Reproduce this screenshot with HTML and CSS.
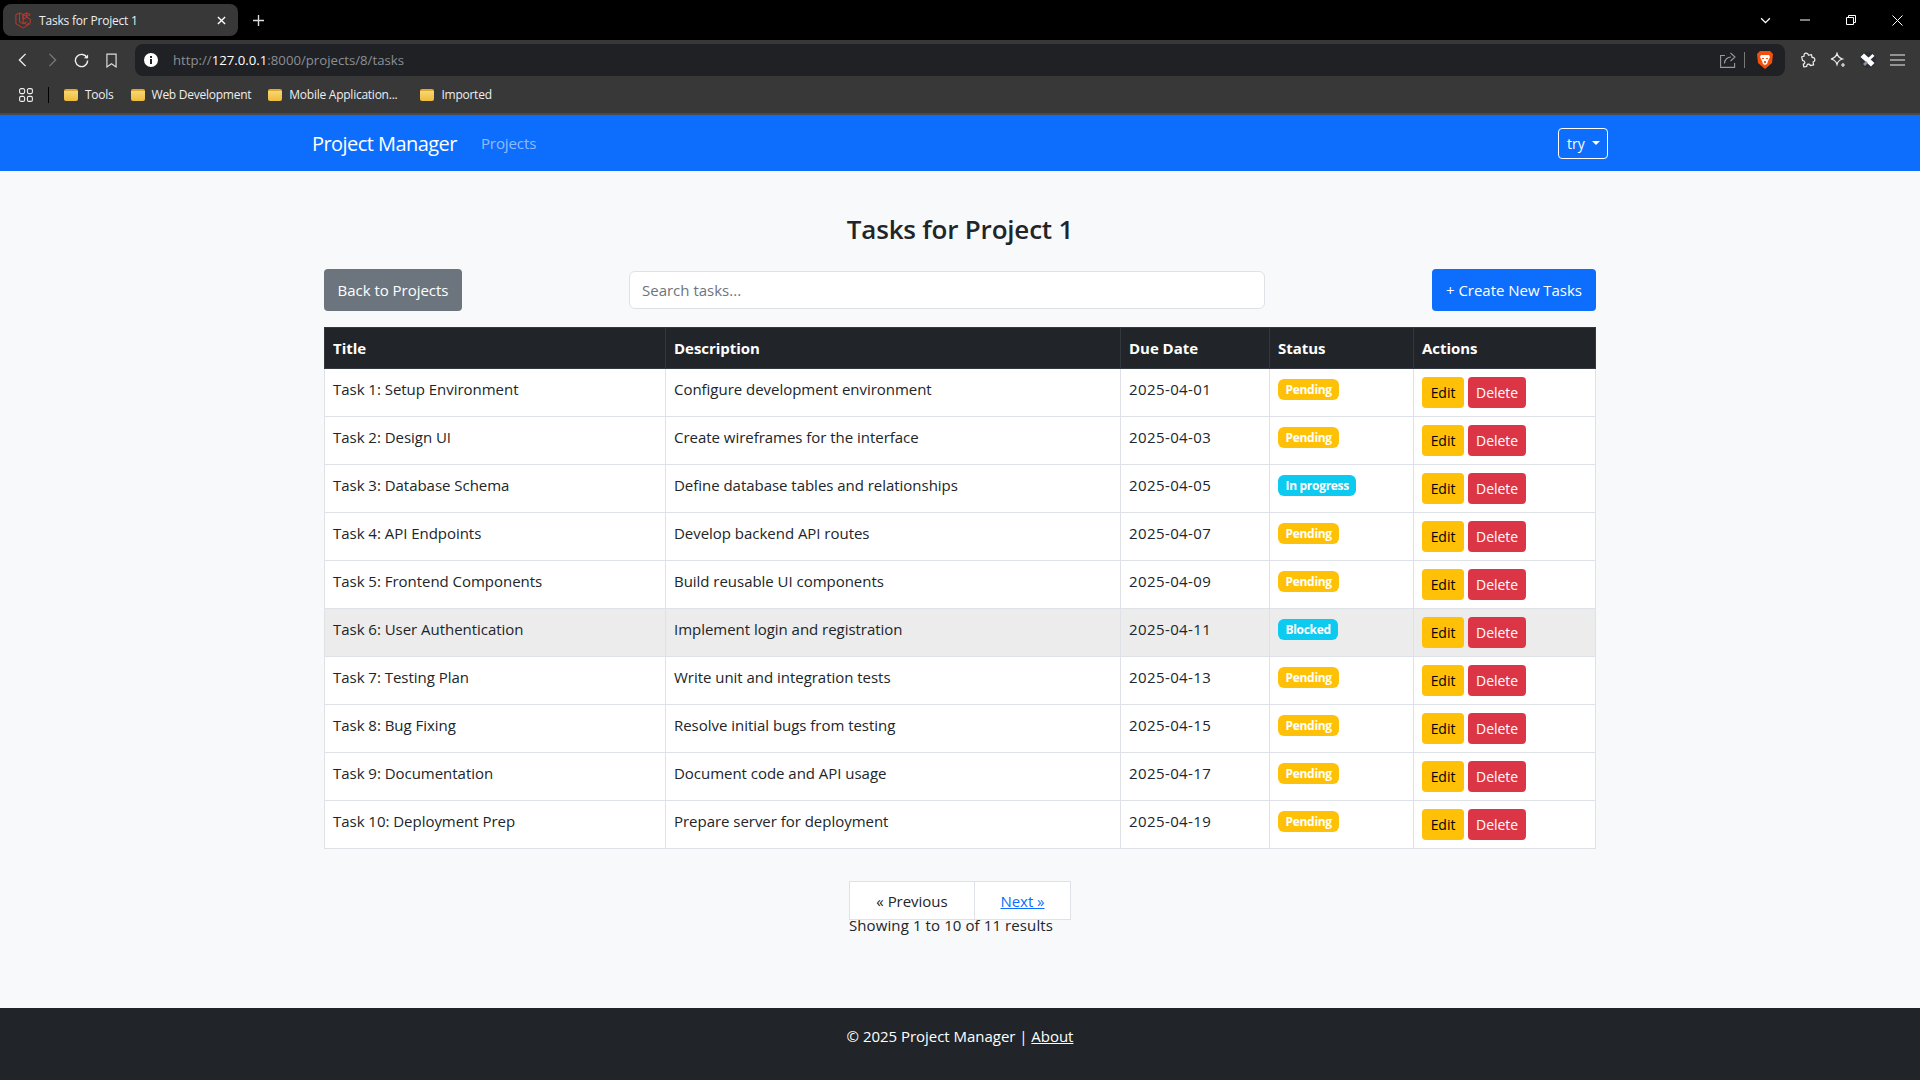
FILE: index.html
```html
<!DOCTYPE html>
<html lang="en">
<head>
  <meta charset="UTF-8">
  <title>Tasks for Project 1</title>
  <link rel="stylesheet" href="styles.css">
</head>
<body>

  <div class="tabstrip">
    <div class="tab">
      <svg class="favicon" viewBox="0 0 20 20" fill="none" stroke="#c0392b" stroke-width="1.1"><path d="M1 4l4-2 4 2v9l4 2 4-2V9l-4-2-4 2M1 4v10l8 5 8-5M5 2v10l4 2 4-2M9 4v5M13 2l4 2-4 2-4-2zM13 2v5"/></svg>
      <span class="tab-title">Tasks for Project 1</span>
      <svg class="tab-close" viewBox="0 0 10 10" stroke="#fff" stroke-width="1.5"><path d="M1 1l8 8M9 1l-8 8"/></svg>
    </div>
    <svg class="new-tab" viewBox="0 0 12 12" stroke="#ddd" stroke-width="1.5"><path d="M6 0v12M0 6h12"/></svg>
    <div class="win-controls">
      <svg class="win-chevron" viewBox="0 0 12 8" fill="none" stroke="#fff" stroke-width="1.5"><path d="M1 1.500l5 5 5-5"/></svg>
      <svg class="win-min" viewBox="0 0 10 2" stroke="#fff"><path d="M0 1h10"/></svg>
      <svg class="win-restore" viewBox="0 0 10 10" fill="none" stroke="#fff"><path d="M.5 2.500h7v7h-7zM2.500 2.500v-2h7v7h-2"/></svg>
      <svg class="win-close" viewBox="0 0 11 11" stroke="#fff"><path d="M.5.5l10 10M10.500.5l-10 10"/></svg>
    </div>
  </div>

  <div class="toolbar">
    <svg class="tool-back" viewBox="0 0 10 16" fill="none" stroke="#eee" stroke-width="1.6"><path d="M8.500 1l-7 7 7 7"/></svg>
    <svg class="tool-forward" viewBox="0 0 10 16" fill="none" stroke="#777" stroke-width="1.6"><path d="M1.500 1l7 7-7 7"/></svg>
    <svg class="tool-reload" viewBox="0 0 16 16" fill="none" stroke="#eee" stroke-width="1.5"><path d="M14 5.500A6.500 6.500 0 1 0 14.500 8"/><path d="M10.500 5.500H15V1.500" fill="#eee" stroke="none"/></svg>
    <svg class="tool-bookmark" viewBox="0 0 12 16" fill="none" stroke="#ddd" stroke-width="1.3"><path d="M1 1h10v14l-5-3.500L1 15z"/></svg>
    <div class="addressbar">
      <svg class="addr-info" viewBox="0 0 14 14"><circle cx="7" cy="7" r="7" fill="#fff"/><path d="M6 6h2v5H6zM6 3h2v2H6z" fill="#222"/></svg>
      <span class="url">http://<b>127.0.0.1</b>:8000/projects/8/tasks</span>
      <svg class="addr-share" viewBox="0 0 16 16" fill="none" stroke="#999" stroke-width="1.1"><path d="M5 3.500H.6v11.900h14V11M4.500 11.500c0-4 3-6.500 6.500-6.500M10.500 1l4.500 4-4.500 4"/></svg>
      <span class="addr-sep"></span>
      <svg class="addr-brave" viewBox="0 0 16 18"><path d="M3 0h10l3 3-1 9-7 6-7-6-1-9z" fill="#f1500f"/><path d="M4 4h8l1 2-2 4-1 3-2 1-2-1-1-3-2-4z" fill="#fff"/><path d="M5 7h2v1H5zM9 7h2v1H9zM7 10h2v2H7z" fill="#f1500f"/></svg>
    </div>
    <svg class="tool-ext" viewBox="0 0 16 16" fill="none" stroke="#eee" stroke-width="1.2" stroke-linejoin="round"><path transform="rotate(-12 8 8)" d="M2.500 3.500h2.500c-.3-3.500 4.500-3.500 4.500 0h3v3c3-.3 3 4.500 0 4.500v3H9c.3-2.500-3.500-2.500-3.500 0h-3V11c2.500.3 2.500-3.500 0-3.500z"/></svg>
    <svg class="tool-star" viewBox="0 0 16 16" fill="none" stroke="#eee" stroke-width="1.2"><path d="M7 1.500c.8 3 2 4.500 5.500 5.500-3.500 1-4.700 2.500-5.500 5.500C6.200 9.500 5 8 1 7c4-1 5.200-2.500 6-5.500z"/><path d="M13 11v4M11 13h4"/></svg>
    <svg class="tool-x" viewBox="0 0 16 16"><circle cx="8" cy="8" r="8" fill="#2b2f36"/><path d="M.5 5L4 1.500 14.500 11 11 14.500z" fill="#fff"/><path d="M12.500 2l2 2-5.500 5-2-2z" fill="#fff"/><path d="M6 9l2 2-3 3-2-2z" fill="#8a8f96"/></svg>
    <svg class="tool-menu" viewBox="0 0 15 12" stroke="#eee" stroke-width="1.2"><path d="M0 1h15M0 6h15M0 11h15"/></svg>
  </div>

  <div class="bookmarks">
    <svg class="apps" viewBox="0 0 14 14" fill="none" stroke="#eee" stroke-width="1.1"><rect x=".6" y=".6" width="5" height="5" rx="1.500"/><rect x="8.400" y=".6" width="5" height="5" rx="1.500"/><rect x=".6" y="8.400" width="5" height="5" rx="1.500"/><rect x="8.400" y="8.400" width="5" height="5" rx="1.500"/></svg>
    <span class="bm-sep"></span>
    <a class="bm bm-tools"><span class="folder"></span>Tools</a>
    <a class="bm bm-web"><span class="folder"></span>Web Development</a>
    <a class="bm bm-mobile"><span class="folder"></span>Mobile Application...</a>
    <a class="bm"><span class="folder"></span>Imported</a>
  </div>

  <nav class="navbar">
    <div class="nav-inner">
      <a class="brand">Project Manager</a>
      <a class="nav-link">Projects</a>
      <button class="user-btn">try<span class="caret"></span></button>
    </div>
  </nav>

  <main class="container">
    <h1>Tasks for Project 1</h1>

    <div class="actions">
      <a class="btn btn-back">Back to Projects</a>
      <input class="search" type="text" placeholder="Search tasks...">
      <a class="btn btn-create">+ Create New Tasks</a>
    </div>

    <table class="tasks">
      <thead>
        <tr>
          <th class="col-title">Title</th>
          <th class="col-desc">Description</th>
          <th class="col-date">Due Date</th>
          <th class="col-status">Status</th>
          <th>Actions</th>
        </tr>
      </thead>
      <tbody>
        <tr>
          <td>Task 1: Setup Environment</td>
          <td>Configure development environment</td>
          <td class="date">2025-04-01</td>
          <td><span class="badge pending">Pending</span></td>
          <td><a class="small edit">Edit</a><a class="small delete">Delete</a></td>
        </tr>
        <tr>
          <td>Task 2: Design UI</td>
          <td>Create wireframes for the interface</td>
          <td class="date">2025-04-03</td>
          <td><span class="badge pending">Pending</span></td>
          <td><a class="small edit">Edit</a><a class="small delete">Delete</a></td>
        </tr>
        <tr>
          <td>Task 3: Database Schema</td>
          <td>Define database tables and relationships</td>
          <td class="date">2025-04-05</td>
          <td><span class="badge info">In progress</span></td>
          <td><a class="small edit">Edit</a><a class="small delete">Delete</a></td>
        </tr>
        <tr>
          <td>Task 4: API Endpoints</td>
          <td>Develop backend API routes</td>
          <td class="date">2025-04-07</td>
          <td><span class="badge pending">Pending</span></td>
          <td><a class="small edit">Edit</a><a class="small delete">Delete</a></td>
        </tr>
        <tr>
          <td>Task 5: Frontend Components</td>
          <td>Build reusable UI components</td>
          <td class="date">2025-04-09</td>
          <td><span class="badge pending">Pending</span></td>
          <td><a class="small edit">Edit</a><a class="small delete">Delete</a></td>
        </tr>
        <tr class="hover">
          <td>Task 6: User Authentication</td>
          <td>Implement login and registration</td>
          <td class="date">2025-04-11</td>
          <td><span class="badge info">Blocked</span></td>
          <td><a class="small edit">Edit</a><a class="small delete">Delete</a></td>
        </tr>
        <tr>
          <td>Task 7: Testing Plan</td>
          <td>Write unit and integration tests</td>
          <td class="date">2025-04-13</td>
          <td><span class="badge pending">Pending</span></td>
          <td><a class="small edit">Edit</a><a class="small delete">Delete</a></td>
        </tr>
        <tr>
          <td>Task 8: Bug Fixing</td>
          <td>Resolve initial bugs from testing</td>
          <td class="date">2025-04-15</td>
          <td><span class="badge pending">Pending</span></td>
          <td><a class="small edit">Edit</a><a class="small delete">Delete</a></td>
        </tr>
        <tr>
          <td>Task 9: Documentation</td>
          <td>Document code and API usage</td>
          <td class="date">2025-04-17</td>
          <td><span class="badge pending">Pending</span></td>
          <td><a class="small edit">Edit</a><a class="small delete">Delete</a></td>
        </tr>
        <tr>
          <td>Task 10: Deployment Prep</td>
          <td>Prepare server for deployment</td>
          <td class="date">2025-04-19</td>
          <td><span class="badge pending">Pending</span></td>
          <td><a class="small edit">Edit</a><a class="small delete">Delete</a></td>
        </tr>
      </tbody>
    </table>

    <div class="pager-wrap">
      <div class="pager">
        <div class="pager-links">
          <span class="page prev">« Previous</span>
          <a class="page next">Next »</a>
        </div>
        <p class="results">Showing 1 to 10 of 11 results</p>
      </div>
    </div>
  </main>

  <footer class="footer">© 2025 Project Manager | <a>About</a></footer>

</body>
</html>
```

FILE: styles.css
```css
* { box-sizing: border-box; }
html, body { margin: 0; padding: 0; height: 100%; }
body {
  display: flex; flex-direction: column; min-height: 1080px; overflow: hidden;
  font-family: "Open Sans", "Noto Sans", sans-serif; font-size: 15px;
  letter-spacing: -0.03px; color: #212529; background-color: #f8f9fa;
}
svg { display: block; flex: none; }

/* browser chrome */
.tabstrip { display: flex; align-items: center; height: 40px; background: #000; padding-left: 3px; }
.tab {
  display: flex; align-items: center; width: 235px; height: 32px; padding: 0 12px 0 12px;
  background: #383838; border-radius: 8px; color: #eee; font-size: 12px; letter-spacing: -0.2px;
}
.favicon { width: 18px; height: 18px; margin-right: 6px; }
.tab-title { flex: 1; }
.tab-close { width: 9px; height: 9px; stroke-width: 1.5; }
.new-tab { width: 11px; height: 11px; margin-left: 15px; }
.win-controls { display: flex; align-items: center; margin-left: auto; }
.win-chevron { width: 11px; height: 7px; margin-right: 29px; }
.win-min { width: 10px; height: 2px; margin-right: 36px; }
.win-restore { width: 10px; height: 10px; margin-right: 36px; }
.win-close { width: 11px; height: 11px; margin-right: 17px; }

.toolbar { display: flex; align-items: center; height: 36px; padding-top: 4px; background: #383838; padding-left: 18px; }
.tool-back { width: 9px; height: 14px; margin-right: 21px; }
.tool-forward { width: 9px; height: 14px; margin-right: 17px; }
.tool-reload { width: 15px; height: 15px; margin-right: 17px; }
.tool-bookmark { width: 11px; height: 15px; margin-right: 18px; }
.addressbar {
  display: flex; align-items: center; width: 1650px; height: 32px; padding: 0 12px 0 9px;
  background: #202124; border-radius: 8px;
}
.addr-info { width: 14px; height: 14px; margin-right: 15px; }
.url { flex: 1; font-size: 13.2px; color: #8c8f94; letter-spacing: 0; }
.url b { font-weight: 400; color: #fff; }
.addr-share { width: 16px; height: 16px; margin-right: 8px; }
.addr-sep { width: 1px; height: 16px; background: #777; margin-right: 12px; }
.addr-brave { width: 16px; height: 18px; }
.tool-ext { width: 16px; height: 16px; margin-left: 15px; }
.tool-star { width: 16px; height: 16px; margin-left: 14px; }
.tool-x { width: 16px; height: 16px; margin-left: 14px; }
.tool-menu { width: 15px; height: 12px; margin-left: 14px; }

.bookmarks {
  display: flex; align-items: center; height: 39px; padding-left: 19px; background: #383838;
  border-bottom: 2px solid #4a4a4a; font-size: 12px; letter-spacing: -0.25px; color: #eee;
}
.apps { width: 14px; height: 14px; }
.bm-sep { width: 1px; height: 16px; background: #000; margin: 0 15px 0 15px; }
.bm { display: flex; align-items: center; }
.bm-tools { margin-right: 17px; }
.bm-web { margin-right: 17px; }
.bm-mobile { margin-right: 23px; }
.folder {
  width: 14px; height: 12px; margin-right: 7px; border-radius: 2px;
  background: linear-gradient(#f7d774, #f0bb3a);
  border-top: 2px solid #e0a82e;
}

/* navbar */
.navbar { height: 56px; background: #0d6efd; }
.nav-inner { display: flex; align-items: center; width: 1320px; height: 100%; margin: 0 auto; padding: 0 12px; }
.brand { font-size: 20px; letter-spacing: -0.55px; color: #fff; margin-right: 24px; }
.nav-link { font-size: 15px; letter-spacing: -0.1px; color: rgba(255,255,255,.55); }
.user-btn {
  display: flex; align-items: center; margin-left: auto; width: 50px; height: 31px; padding: 0 0 0 8px;
  background: transparent; border: 1px solid #fff; border-radius: 4px;
  color: #fff; font: inherit; font-size: 14px;
}
.caret {
  width: 0; height: 0; margin-left: 7px;
  border-top: 4px solid #fff; border-left: 4px solid transparent; border-right: 4px solid transparent;
}

/* content */
.container { width: 1320px; margin: 0 auto; padding: 0 24px; }
h1 { margin: 41px 0 23px; height: 34px; line-height: 34px; text-align: center; font-size: 26px; font-weight: 600; letter-spacing: -0.2px; }
.actions { display: flex; justify-content: space-between; align-items: center; height: 42px; margin-bottom: 16px; }
.btn { display: flex; align-items: center; justify-content: center; height: 42px; border-radius: 4px; color: #fff; }
.btn-back { width: 138px; background: #6c757d; }
.btn-create { width: 164px; background: #0d6efd; }
.search {
  width: 636px; height: 38px; padding: 0 12px; background: #fff; border: 1px solid #dee2e6;
  border-radius: 6px; font: inherit; color: #212529; outline: none;
}
.search::placeholder { color: #6c757d; }

.tasks { width: 1272px; border-collapse: collapse; table-layout: fixed; background: #fff; }
.tasks th {
  height: 41px; padding: 0 8px; background: #212529; color: #fff; text-align: left; font-weight: 700;
  border: 1px solid #32383e;
}
.tasks td { height: 48px; padding: 0 8px 8px; border: 1px solid #dee2e6; vertical-align: middle; }
.tasks td.date { letter-spacing: .4px; }
.col-title { width: 341px; }
.col-desc { width: 455px; }
.col-date { width: 149px; }
.col-status { width: 144px; }
.tasks tr.hover td { background: #ececec; }
.badge {
  display: inline-block; height: 21px; line-height: 21px; padding: 0 7.500px; margin-top: 2px; border-radius: 6px;
  color: #fff; font-size: 12px; font-weight: 700; letter-spacing: -0.3px;
}
.pending { background: #ffc107; }
.info { background: #0dcaf0; }
.small {
  display: inline-block; height: 31px; line-height: 31px; padding: 0 8px; margin-top: 8px; border-radius: 4px;
  font-size: 14px; text-align: center;
}
.edit { width: 42px; background: #ffc107; color: #000; margin-right: 4px; }
.delete { width: 58px; background: #dc3545; color: #fff; }

.pager-wrap { display: flex; justify-content: center; margin-top: 32px; }
.pager { width: 222px; }
.pager-links { display: flex; height: 39px; }
.page { display: flex; align-items: center; justify-content: center; height: 39px; background: #fff; border: 1px solid #dee2e6; }
.prev { width: 126px; }
.next { width: 97px; margin-left: -1px; color: #0d6efd; text-decoration: underline; }
.results { margin: 0; line-height: 10px; white-space: nowrap; letter-spacing: .1px; }

.footer {
  margin-top: auto; height: 72px; padding-top: 17px; background: #212529; color: #fff; text-align: center;
  line-height: 22px;
}
.footer a { text-decoration: underline; }
```
